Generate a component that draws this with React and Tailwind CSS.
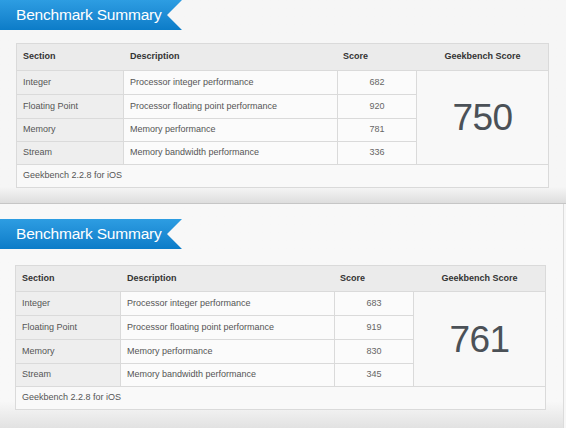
import React from 'react';

const top = {
  rows: [
    ['Integer', 'Processor integer performance', '682'],
    ['Floating Point', 'Processor floating point performance', '920'],
    ['Memory', 'Memory performance', '781'],
    ['Stream', 'Memory bandwidth performance', '336'],
  ],
  total: '750',
};

const bottom = {
  rows: [
    ['Integer', 'Processor integer performance', '683'],
    ['Floating Point', 'Processor floating point performance', '919'],
    ['Memory', 'Memory performance', '830'],
    ['Stream', 'Memory bandwidth performance', '345'],
  ],
  total: '761',
};

function Ribbon() {
  return (
    <div className="h-[30px] w-[182px] bg-gradient-to-b from-[#2d9de2] to-[#0b7cc8] [clip-path:polygon(0_0,182px_0,167px_15px,182px_30px,0_30px)] flex items-center pl-[16px]">
      <span className="text-white text-[15.5px] tracking-[-0.2px] leading-none">Benchmark Summary</span>
    </div>
  );
}

function ScoreTable({ data, colsClass, rowsClass, className }) {
  return (
    <div className={`grid gap-px p-px bg-[#dadada] text-[9px] ${colsClass} ${rowsClass} ${className}`}>
      {/* header has no dividers, so it spans the whole row */}
      <div className={`col-span-4 grid ${colsClass} gap-px bg-[#ebebeb] font-bold text-[#333]`}>
        <div className="flex items-center pl-[6px]">Section</div>
        <div className="flex items-center pl-[6px]">Description</div>
        <div className="flex items-center pl-[5px]">Score</div>
        <div className="flex items-center justify-center">Geekbench Score</div>
      </div>
      {data.rows.map(([section, desc, score], i) => (
        <React.Fragment key={section}>
          <div className="bg-[#eeeeee] text-[#555] flex items-center pl-[6px]">{section}</div>
          <div className="bg-[#fbfbfb] text-[#555] flex items-center pl-[6px]">{desc}</div>
          <div className="bg-[#fbfbfb] text-[#666] flex items-center justify-center">{score}</div>
          {i === 0 && (
            <div className="row-span-4 bg-[#f8f8f8] flex items-center justify-center text-[37px] text-[#4b5157] tracking-[-0.5px] leading-none">
              {data.total}
            </div>
          )}
        </React.Fragment>
      ))}
      <div className="col-span-4 bg-[#f9f9f9] text-[#555] flex items-center pl-[6px]">Geekbench 2.2.8 for iOS</div>
    </div>
  );
}

export default function App() {
  return (
    <div className="w-[566px] h-[428px] overflow-hidden flex flex-col bg-[#f7f7f7] font-['Liberation_Sans',Arial,sans-serif]">
      <div className="h-[203px] flex flex-col bg-gradient-to-b from-[#f6f6f6] from-[92%] to-[#dedede]">
        <Ribbon />
        <ScoreTable
          data={top}
          colsClass="grid-cols-[106px_213px_78px_131px]"
          rowsClass="grid-rows-[26px_23px_23px_22px_22px_22px]"
          className="mt-[13px] ml-[16px] w-[533px]"
        />
      </div>
      <div className="h-px bg-[#c6c6c6]" />
      <div className="flex-1 flex flex-col pt-[15px] border-r border-[#dcdcdc] mr-[2px] bg-gradient-to-b from-[#f8f8f8] from-[88%] to-[#e2e2e2]">
        <Ribbon />
        <ScoreTable
          data={bottom}
          colsClass="grid-cols-[104px_213px_78px_131px]"
          rowsClass="grid-rows-[25px_23px_23px_23px_22px_22px]"
          className="mt-[16px] ml-[15px] w-[531px]"
        />
      </div>
    </div>
  );
}
